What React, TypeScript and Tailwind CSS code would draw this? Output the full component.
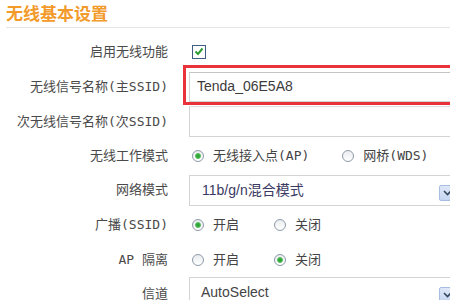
import React from "react";

const labelFont = { fontFamily: '"DejaVu Sans Mono", "Noto Sans CJK SC", sans-serif' };
const cjk = { fontFamily: '"Noto Sans CJK SC", sans-serif' };
const arial = { fontFamily: '"Liberation Sans", "Noto Sans CJK SC", sans-serif' };

function Radio({ checked }: { checked?: boolean }) {
  return (
    <span className="flex items-center justify-center w-[12px] h-[12px] rounded-full border border-[#8e9aa8] bg-gradient-to-b from-[#e9ecef] to-white shrink-0">
      {checked && <span className="w-[6px] h-[6px] rounded-full bg-[#2fa638] border border-[#5bbf5f]" />}
    </span>
  );
}

function RadioOpt({ checked, label }: { checked?: boolean; label: string }) {
  return (
    <div className="flex items-center">
      <Radio checked={checked} />
      <span className="ml-[9px] text-[13px] text-[#444] whitespace-nowrap" style={labelFont}>
        {label}
      </span>
    </div>
  );
}

function Row({ label, h, children }: { label: string; h: string; children: React.ReactNode }) {
  return (
    <div className={`flex items-center ${h}`}>
      <div className="w-[168px] shrink-0 text-right text-[13px] text-[#4a4a4a] whitespace-nowrap" style={labelFont}>
        {label}
      </div>
      <div className="ml-[21px] flex items-center shrink-0">{children}</div>
    </div>
  );
}

function Arrow() {
  return (
    <div className="absolute right-[-8px] top-[9px] w-[19px] h-[16px] border border-[#a8bde0] bg-gradient-to-b from-[#dfe8f8] to-[#c5d5f0] rounded-[2px] flex items-center pl-[3px]">
      <svg width="9" height="6" viewBox="0 0 9 6">
        <path d="M1 1 L4.5 4.5 L8 1" stroke="#34495e" strokeWidth="1.6" fill="none" />
      </svg>
    </div>
  );
}

export default function App() {
  return (
    <div className="w-[450px] h-[300px] overflow-hidden bg-white relative">
      <div className="ml-[6px] h-[28px] border-b border-[#e6e6e6] flex items-start">
        <span className="text-[17px] font-bold text-[#f29a2a] leading-none mt-[4px]" style={cjk}>
          无线基本设置
        </span>
      </div>
      <div className="h-[6px]" />
      <Row label="启用无线功能" h="h-[35px]">
        <div className="ml-[3px] w-[14px] h-[14px] border border-[#3f5d82] bg-white flex items-center justify-center">
          <svg width="10" height="9" viewBox="0 0 10 9">
            <path d="M1.5 4.5 L4 7 L8.5 1.5" stroke="#2e9d35" strokeWidth="2" fill="none" />
          </svg>
        </div>
      </Row>
      <Row label="无线信号名称(主SSID)" h="h-[35px]">
        <div className="relative">
          <div className="absolute left-[-6px] top-[-7px] w-[300px] h-[40px] border-[3px] border-[#e8333a]" />
          <div className="w-[280px] h-[30px] border border-[#d4d4d4] border-t-[#c4c4c4] bg-white flex items-center pl-[7px] text-[14px] text-[#3c3c3c]" style={arial}>
            Tenda_06E5A8
          </div>
        </div>
      </Row>
      <Row label="次无线信号名称(次SSID)" h="h-[35px]">
        <div className="w-[280px] h-[31px] border border-[#d4d4d4] border-t-[#e0e0e0] bg-white" />
      </Row>
      <Row label="无线工作模式" h="h-[34px]">
        <div className="flex items-center ml-[3px]">
          <RadioOpt checked label="无线接入点(AP)" />
          <div className="ml-[33px]">
            <RadioOpt label="网桥(WDS)" />
          </div>
        </div>
      </Row>
      <Row label="网络模式" h="h-[34px]">
        <div className="relative w-[262px] h-[31px] border border-[#d4d4d4] bg-white flex items-center pl-[12px] text-[14px] text-[#3a3a62]" style={arial}>
          11b/g/n混合模式
          <Arrow />
        </div>
      </Row>
      <Row label="广播(SSID)" h="h-[35px]">
        <div className="flex items-center ml-[3px]">
          <RadioOpt checked label="开启" />
          <div className="ml-[35px]">
            <RadioOpt label="关闭" />
          </div>
        </div>
      </Row>
      <Row label="AP 隔离" h="h-[35px]">
        <div className="flex items-center ml-[3px]">
          <RadioOpt label="开启" />
          <div className="ml-[35px]">
            <RadioOpt checked label="关闭" />
          </div>
        </div>
      </Row>
      <div className="flex items-start h-[40px]">
        <div className="w-[168px] shrink-0 text-right text-[13px] text-[#4a4a4a] mt-[7px]" style={labelFont}>
          信道
        </div>
        <div className="ml-[21px] shrink-0 relative w-[262px] h-[31px] border border-[#d4d4d4] bg-white flex items-center pl-[11px] text-[14px] text-[#444]" style={arial}>
          AutoSelect
          <Arrow />
        </div>
      </div>
    </div>
  );
}
